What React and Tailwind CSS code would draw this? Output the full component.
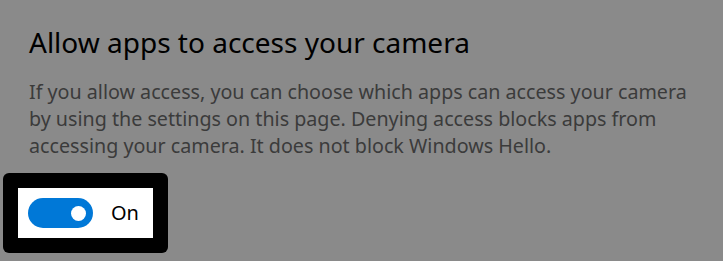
import React from 'react';

const CameraAccess = () => {
  return (
    <div className="w-[723px] h-[261px] bg-[#8a8a8a] overflow-hidden" style={{ fontFamily: '"Noto Sans", sans-serif' }}>
      <div className="pl-[29px] pt-[24px]">
        <h2 className="text-[28px] leading-[36px] text-black font-normal">
          Allow apps to access your camera
        </h2>
        <p className="mt-[18px] text-[19.7px] leading-[27px] text-[#3b3b3b] w-[680px]">
          If you allow access, you can choose which apps can access your camera
          by using the settings on this page. Denying access blocks apps from
          accessing your camera. It does not block Windows Hello.
        </p>
      </div>

      <div className="ml-[3px] mt-[14px] w-[165px] h-[80px] bg-black rounded-[6px] p-[15px]">
        <div className="h-full bg-white flex items-center pl-[10px]">
          <div className="w-[65px] h-[30px] rounded-full bg-[#0078d7] flex items-center justify-end pr-[7px]">
            <div className="w-[15px] h-[15px] rounded-full bg-white" />
          </div>
          <span className="ml-[18px] text-[20px] text-black">On</span>
        </div>
      </div>
    </div>
  );
};

export default CameraAccess;
